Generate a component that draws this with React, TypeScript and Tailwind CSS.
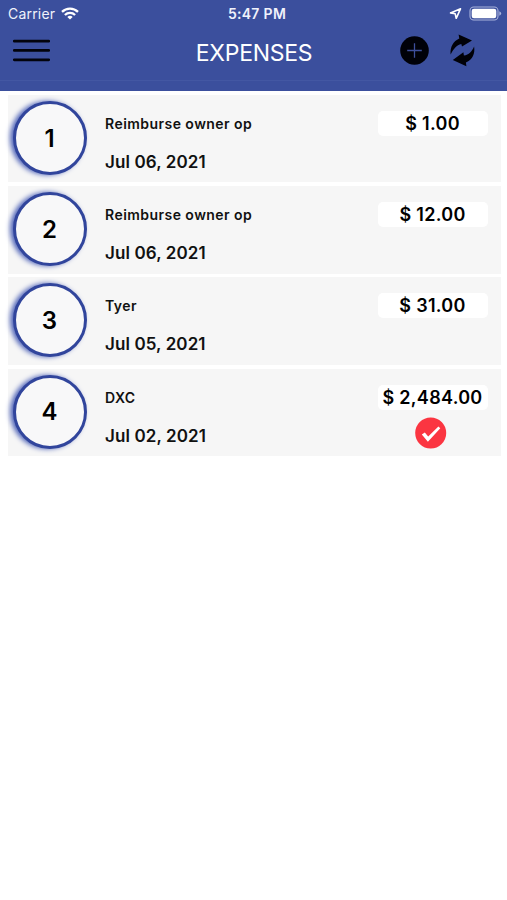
import React from "react";

type Expense = { title: string; date: string; amount: string; approved?: boolean };

const expenses: Expense[] = [
  { title: "Reimburse owner op", date: "Jul 06, 2021", amount: "$ 1.00" },
  { title: "Reimburse owner op", date: "Jul 06, 2021", amount: "$ 12.00" },
  { title: "Tyer", date: "Jul 05, 2021", amount: "$ 31.00" },
  { title: "DXC", date: "Jul 02, 2021", amount: "$ 2,484.00", approved: true },
];

function StatusBar() {
  return (
    <div className="grid h-[27px] grid-cols-3 items-center pl-[8px] pr-[5px] text-[#f0f2fb]">
      <div className="flex items-center gap-[6px]">
        <span className="text-[14px] leading-[27px] tracking-[0.2px]">Carrier</span>
        <svg width="18" height="13" viewBox="0 0 18 13" fill="none" stroke="white" strokeWidth="2.3">
          <path d="M1 4.9C5.5 .5 12.5 .5 17 4.9" />
          <path d="M3.9 8C6.8 5.2 11.2 5.2 14.1 8" />
          <path d="M9 12.6L6.3 9.9Q9 7.7 11.7 9.9Z" fill="white" stroke="none" />
        </svg>
      </div>
      <span className="pl-[4px] text-center text-[14px] font-semibold leading-[27px] tracking-[0.3px]">5:47 PM</span>
      <div className="flex items-center justify-end gap-[7px]">
        <svg width="13" height="13" viewBox="0 0 13 13" fill="none" stroke="white" strokeWidth="1.6" strokeLinejoin="round">
          <path d="M11.5 1.8L1.5 5.9L6.2 6.8L7.2 11.3Z" />
        </svg>
        <svg width="33" height="15" viewBox="0 0 33 15">
          <rect x="1" y="1" width="28" height="13" rx="3.8" fill="none" stroke="#a9b3dc" strokeWidth="1.1" />
          <rect x="2.7" y="2.7" width="24.6" height="9.6" rx="2.3" fill="white" />
          <path d="M30.3 5.3Q32.2 6 32.2 7.5T30.3 9.7Z" fill="#a9b3dc" />
        </svg>
      </div>
    </div>
  );
}

function Toolbar() {
  return (
    <div className="grid h-[53px] grid-cols-[120px_1fr_120px] items-start pt-[8px]">
      <svg className="ml-[12px] mt-[3px]" width="39" height="25" viewBox="0 0 39 25" stroke="#02030c" strokeWidth="2.8" strokeLinecap="round">
        <path d="M2.3 3.2H36.7M2.3 12.4H36.7M2.3 21.8H36.7" />
      </svg>
      <h1 className="pl-[1px] text-center text-[23px] font-normal leading-[36px] tracking-[-0.3px] text-white">EXPENSES</h1>
      <div className="flex items-start pl-[13px]">
        <svg className="mt-[1px]" width="29" height="29" viewBox="0 0 29 29">
          <circle cx="14.5" cy="14.5" r="14.3" fill="#000108" />
          <path d="M14.5 7.2V21.8M7.2 14.5H21.8" stroke="#3d4f9c" strokeWidth="1.3" />
        </svg>
        <svg className="ml-[20px] -mt-[1px]" width="28" height="34" viewBox="0 0 28 34" fill="#000108">
          <path d="M9.6 .5L23 6.4L13 12.4L12.3 9.9C7.6 11.2 4.6 14.4 1.6 20.4C1 13 4.2 7 10.3 4.4Z" />
          <path d="M17.4 32.2L3.8 26L14.4 18.3L14.9 21.5C20 20.6 22.7 17.8 25.1 12.4C26.2 19.4 23.8 25.4 16.9 28.4Z" />
        </svg>
      </div>
    </div>
  );
}

function ExpenseRow({ item, number }: { item: Expense; number: number }) {
  return (
    <li className="flex h-[87.4px] bg-[#f6f6f6] pl-[5px] pr-[13px]">
      <div className="mt-[6px] flex h-[74px] w-[74px] shrink-0 items-center justify-center rounded-full border-[3px] border-[#31459c] bg-[#f8f8f9] pt-[1px] text-[24px] font-semibold text-black shadow-[-3px_0px_5px_0px_#5266b9]">
        {number}
      </div>
      <div className="ml-[18.5px] flex flex-1 flex-col text-[#111]">
        <span className="mt-[18px] text-[14px] font-semibold leading-[22px] tracking-[0.45px]">{item.title}</span>
        <span className="mt-[15px] text-[17px] font-semibold leading-[24px] tracking-[0.1px]">{item.date}</span>
      </div>
      <div className="flex w-[110px] shrink-0 flex-col items-center pt-[16px]">
        <span className="h-[25px] w-full whitespace-nowrap rounded-[5px] bg-white text-center text-[18px] font-semibold leading-[26px] tracking-[0.3px] text-black">
          {item.amount}
        </span>
        {item.approved && (
          <svg className="-ml-[4px] mt-[7px]" width="32" height="32" viewBox="0 0 32 32">
            <circle cx="15.7" cy="16" r="15.5" fill="#fb3541" />
            <path d="M6.8 17.4L9.8 15.4L13.2 19.4L23.4 9.4L25.3 11.2L12.9 24.8Z" fill="white" />
          </svg>
        )}
      </div>
    </li>
  );
}

export default function App() {
  return (
    <div className="min-h-screen bg-white font-['Inter','Liberation_Sans',sans-serif]">
      <header className="h-[91px] bg-[#3b4f9d]">
        <StatusBar />
        <Toolbar />
        <div className="h-px bg-[#4357a3]" />
      </header>
      <ul className="flex flex-col gap-[3.8px] pl-[7.5px] pr-[6.5px] pt-[4px]">
        {expenses.map((item, i) => (
          <ExpenseRow key={i} item={item} number={i + 1} />
        ))}
      </ul>
    </div>
  );
}
